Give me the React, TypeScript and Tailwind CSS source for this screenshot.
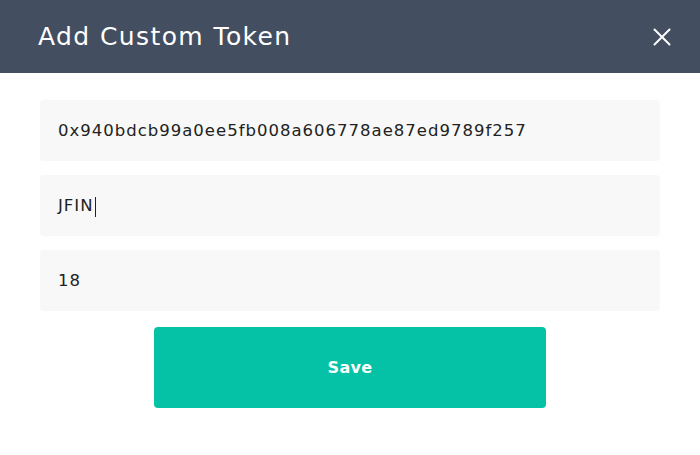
import { X } from "lucide-react"

const fields = ["0x940bdcb99a0ee5fb008a606778ae87ed9789f257", "JFIN", "18"]

export default function App() {
  return (
    <div className="w-[700px] h-[455px] bg-white font-['DejaVu_Sans',sans-serif]">
      <header className="h-[73px] bg-[#434e60] flex items-center justify-between pl-[38px] pr-[23px]">
        <h1 className="text-[25px] text-white tracking-[1.4px]">Add Custom Token</h1>
        <button aria-label="Close" className="text-white">
          <X className="size-[30px]" strokeWidth={1.6} />
        </button>
      </header>
      <div className="flex flex-col gap-[14px] px-[40px] pt-[27px]">
        {fields.map((v, i) => (
          <div key={i} className="h-[61px] rounded bg-[#f8f8f8] flex items-center pl-[18px] pt-[2px] text-[16.5px] tracking-[1px] text-[#222]">
            <span>{v}</span>
            {i === 1 && <span className="ml-[1px] w-px h-[20px] bg-[#222]" />}
          </div>
        ))}
      </div>
      <div className="flex justify-center pt-[16px]">
        <button className="w-[392px] h-[81px] rounded bg-[#05c1a6] text-white text-[16px] font-semibold tracking-[0.3px]">
          Save
        </button>
      </div>
    </div>
  )
}
